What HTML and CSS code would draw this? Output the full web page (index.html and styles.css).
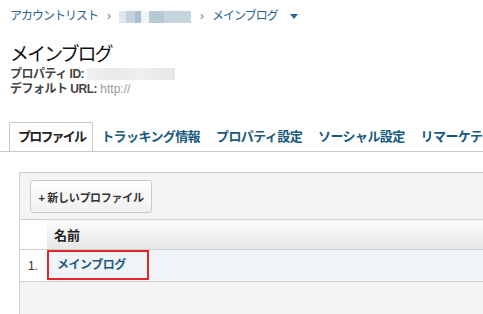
FILE: index.html
```html
<!DOCTYPE html>
<html lang="ja">
<head>
  <meta charset="UTF-8">
  <title>メインブログ</title>
  <link rel="stylesheet" href="styles.css">
</head>
<body>
  <div class="crumbs">
    <a class="crumb" href="#">アカウントリスト</a>
    <span class="sep">›</span>
    <span class="blur blur-blue"></span>
    <span class="sep">›</span>
    <a class="crumb" href="#">メインブログ</a>
    <span class="caret"></span>
  </div>

  <h1 class="title">メインブログ</h1>
  <div class="meta">
    <div class="meta-row"><b>プロパティ ID:</b> <span class="blur blur-gray"></span></div>
    <div class="meta-row"><b>デフォルト URL:</b> <span class="url">http://</span></div>
  </div>

  <div class="tabs">
    <a class="tab active" href="#">プロファイル</a>
    <a class="tab" href="#">トラッキング情報</a>
    <a class="tab" href="#">プロパティ設定</a>
    <a class="tab" href="#">ソーシャル設定</a>
    <a class="tab" href="#">リマーケテ</a>
  </div>

  <div class="panel">
    <div class="toolbar">
      <button class="btn">+ 新しいプロファイル</button>
    </div>
    <table class="list">
      <tr class="head">
        <th class="num"></th>
        <th class="name">名前</th>
      </tr>
      <tr class="row">
        <td class="num">1.</td>
        <td class="name"><span class="mark"><a href="#">メインブログ</a></span></td>
      </tr>
    </table>
  </div>
</body>
</html>
```

FILE: styles.css
```css
html, body {
  margin: 0;
  padding: 0;
  background: #fff;
  font-family: "Liberation Sans", "Noto Sans CJK JP", sans-serif;
  color: #222;
  height: 100%;
  overflow: hidden;
}

a {
  text-decoration: none;
}

.crumbs {
  display: flex;
  align-items: center;
  padding: 9px 0 0 10px;
  height: 15px;
  font-size: 12px;
  line-height: 15px;
  white-space: nowrap;
}

.crumb {
  color: #2b6490;
  letter-spacing: -1px;
}

.sep {
  color: #777;
  margin: 0 8px 0 9px;
}

.blur {
  display: inline-block;
  height: 12px;
  vertical-align: middle;
}

.blur-blue {
  width: 72px;
  background: linear-gradient(90deg, #dfe7ec 0 10%, #c3d3dd 10% 22%, #a9c1d0 22% 30%, #f1f4f6 30% 42%, #b6cad6 42% 62%, #c5d5de 62% 100%);
}

.blur-gray {
  width: 88px;
  background: linear-gradient(90deg, #f1f1f1, #e9e9e9 30%, #efefef 60%, #e6e6e6);
  vertical-align: -2px;
}

.caret {
  width: 0;
  height: 0;
  margin-left: 12px;
  border-left: 4px solid transparent;
  border-right: 4px solid transparent;
  border-top: 5px solid #2b6490;
}

.title {
  margin: 19px 0 0 10px;
  font-size: 19px;
  font-weight: normal;
  line-height: 24px;
  letter-spacing: -2px;
  color: #111;
}

.meta {
  padding-left: 10px;
  font-size: 12px;
  line-height: 15px;
  color: #444;
}

.meta b {
  letter-spacing: -0.5px;
}

.url {
  color: #999;
}

.tabs {
  display: flex;
  margin-top: 25px;
  padding-left: 9px;
  border-bottom: 1px solid #c8c8c8;
  white-space: nowrap;
  overflow: hidden;
}

.tab {
  flex: none;
  padding: 0 7px;
  height: 28px;
  line-height: 28px;
  font-size: 13px;
  font-weight: bold;
  letter-spacing: -0.6px;
  color: #18597e;
  border: 1px solid transparent;
  border-bottom: none;
  margin-bottom: -1px;
}

.tab.active {
  padding: 0 7px 0 8px;
  color: #222;
  background: #fff;
  border-color: #c8c8c8;
  height: 29px;
  letter-spacing: -1.8px;
  border-radius: 2px 2px 0 0;
}

.panel {
  margin: 20px 0 0 19px;
  height: 141px;
  background: #f4f4f4;
  border: 1px solid #cfcfcf;
  border-right: none;
  border-bottom: none;
}

.toolbar {
  padding: 7px 10px 6px;
}

.btn {
  width: 122px;
  height: 33px;
  padding: 0;
  background: linear-gradient(#fefefe, #f0f0f0);
  border: 1px solid #cacaca;
  border-radius: 3px;
  font-family: "Liberation Sans", "Noto Sans CJK JP", sans-serif;
  font-size: 11px;
  font-weight: bold;
  color: #333;
  letter-spacing: -0.3px;
}

.list {
  width: 100%;
  border-collapse: collapse;
}

.list th,
.list td {
  padding: 0;
  text-align: left;
}

.head {
  height: 30px;
  border-top: 1px solid #cfcfcf;
  border-bottom: 1px solid #cfcfcf;
}

.head .num {
  width: 27px;
  background: #fff;
}

.head .name {
  padding-left: 7px;
  font-size: 13px;
  font-weight: bold;
  color: #222;
  background: linear-gradient(#fbfbfb, #e6e6e6);
}

.row {
  height: 32px;
  border-bottom: 1px solid #cfcfcf;
}

.row .num {
  background: #fff;
  padding-left: 8px;
  font-size: 12px;
  color: #333;
}

.row .name {
  background: #f1f4f7;
  vertical-align: top;
}

.mark {
  display: block;
  box-sizing: border-box;
  width: 102px;
  height: 30px;
  padding-left: 8px;
  border: 2px solid #e3262a;
  line-height: 26px;
  font-size: 12px;
  font-weight: bold;
  letter-spacing: -0.5px;
}

.mark a {
  color: #1c5a85;
}
```
